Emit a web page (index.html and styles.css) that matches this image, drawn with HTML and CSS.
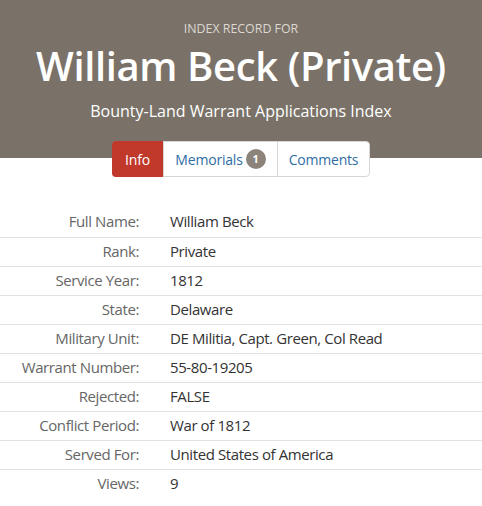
FILE: index.html
```html
<!DOCTYPE html>
<html lang="en">
<head>
  <meta charset="UTF-8">
  <title>William Beck (Private) - Index Record</title>
  <link rel="stylesheet" href="styles.css">
</head>
<body>
  <!-- Record Header -->
  <header class="record-header">
    <div class="eyebrow">INDEX RECORD FOR</div>
    <h1 class="record-title">William Beck (Private)</h1>
    <div class="record-source">Bounty-Land Warrant Applications Index</div>
  </header>

  <!-- Tabs -->
  <nav class="tabs">
    <a href="#" class="tab active">Info</a>
    <a href="#" class="tab">Memorials <span class="badge">1</span></a>
    <a href="#" class="tab">Comments</a>
  </nav>

  <!-- Record Details -->
  <div class="details">
    <div class="row"><div class="label">Full Name:</div><div class="value">William Beck</div></div>
    <div class="row"><div class="label">Rank:</div><div class="value">Private</div></div>
    <div class="row"><div class="label">Service Year:</div><div class="value">1812</div></div>
    <div class="row"><div class="label">State:</div><div class="value">Delaware</div></div>
    <div class="row"><div class="label">Military Unit:</div><div class="value">DE Militia, Capt. Green, Col Read</div></div>
    <div class="row"><div class="label">Warrant Number:</div><div class="value">55-80-19205</div></div>
    <div class="row"><div class="label">Rejected:</div><div class="value">FALSE</div></div>
    <div class="row"><div class="label">Conflict Period:</div><div class="value">War of 1812</div></div>
    <div class="row"><div class="label">Served For:</div><div class="value">United States of America</div></div>
    <div class="row"><div class="label">Views:</div><div class="value">9</div></div>
  </div>
</body>
</html>
```
FILE: styles.css
```css
/* General Styles */
body {
  margin: 0;
  font-family: "Open Sans", "Noto Sans", sans-serif;
  background-color: #fff;
  color: #333;
}

/* Header Styles */
.record-header {
  background-color: #7a7268;
  color: #fff;
  text-align: center;
  padding: 21px 0 0;
  height: 137px;
}

.eyebrow {
  font-size: 12.4px;
  color: #ddd8d2;
  line-height: 16px;
}

.record-title {
  margin: 4px 0 0;
  font-size: 40px;
  font-weight: 600;
  line-height: 50px;
  letter-spacing: -0.4px;
}

.record-source {
  font-size: 16px;
  line-height: 22px;
  margin-top: 9px;
}

/* Tabs */
.tabs {
  display: flex;
  width: 258px;
  margin: -17px auto 0;
  background-color: #fff;
  border: 1px solid #d6d6d6;
  border-radius: 4px;
  box-sizing: border-box;
  height: 36px;
}

.tab {
  display: flex;
  align-items: center;
  justify-content: center;
  text-decoration: none;
  color: #2e6da4;
  font-size: 14px;
  letter-spacing: -0.2px;
  border-left: 1px solid #d6d6d6;
}

.tab:first-child {
  border-left: none;
}

.tab.active {
  background-color: #c0392b;
  color: #fff;
  width: 51px;
  margin: -1px 0 -1px -1px;
  border-radius: 4px 0 0 4px;
}

.tab:nth-child(2) {
  width: 113px;
}

.tab:nth-child(3) {
  flex: 1;
}

.badge {
  display: inline-block;
  background-color: #8c837b;
  color: #fff;
  font-size: 11px;
  font-weight: 700;
  width: 20px;
  height: 20px;
  line-height: 20px;
  border-radius: 10px;
  text-align: center;
  margin-left: 3px;
  letter-spacing: 0;
}

/* Details */
.details {
  margin-top: 31px;
}

.row {
  display: flex;
  align-items: center;
  height: 29px;
  padding-bottom: 3px;
  border-top: 1px solid #e2e2e2;
  box-sizing: border-box;
  font-size: 15px;
  letter-spacing: -0.4px;
}

.row:first-child {
  border-top: none;
}

.label {
  width: 139px;
  text-align: right;
  color: #666;
}

.value {
  padding-left: 31px;
  color: #333;
}
```
